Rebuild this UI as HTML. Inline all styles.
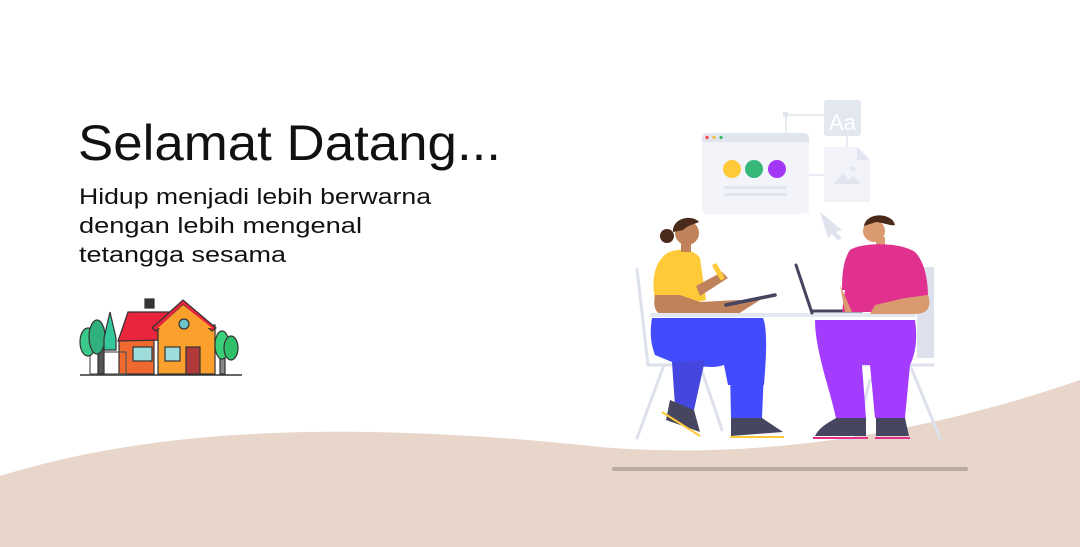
<!DOCTYPE html>
<html><head><meta charset="utf-8"><style>
html,body{margin:0;padding:0;background:#fff;width:1080px;height:547px;overflow:hidden}
svg{display:block}
</style></head><body>
<svg width="1080" height="547" viewBox="0 0 1080 547" xmlns="http://www.w3.org/2000/svg">
<rect width="1080" height="547" fill="#fff"/>
<path d="M0,476 C140,432 330,418 600,447 C780,462 950,425 1080,380 L1080,547 L0,547 Z" fill="#e8d6ca"/>
<line x1="614" y1="469" x2="966" y2="469" stroke="#b9aaa2" stroke-width="4" stroke-linecap="round"/>

<g font-family="Liberation Sans, sans-serif" fill="#111">
<text x="78" y="160" font-size="50" font-weight="300" textLength="423" lengthAdjust="spacingAndGlyphs">Selamat Datang...</text>
<text x="79" y="204" font-size="22" textLength="352" lengthAdjust="spacingAndGlyphs">Hidup menjadi lebih berwarna</text>
<text x="79" y="233" font-size="22" textLength="283" lengthAdjust="spacingAndGlyphs">dengan lebih mengenal</text>
<text x="79" y="262" font-size="22" textLength="207" lengthAdjust="spacingAndGlyphs">tetangga sesama</text>
</g>

<!-- house -->
<g stroke="#333" stroke-width="1.2">
<line x1="80" y1="375" x2="242" y2="375" stroke-width="1.5"/>
<rect x="145" y="299" width="9" height="9" fill="#333"/>
<rect x="119" y="340" width="35" height="34" fill="#f06a30"/>
<polygon points="128,312 176,312 165,340 118,341" fill="#e8253d"/>
<rect x="158" y="325" width="57" height="49" fill="#fba02c"/>
<polygon points="152,328 183,300 216,328 212,331 183,305 156,331" fill="#e8253d"/>
<polygon points="158,328 183,305 212,328" fill="#fba02c" stroke="none"/>
<circle cx="184" cy="324" r="5" fill="#6dc3c5"/>
<rect x="133" y="347" width="19" height="14" fill="#9edddc"/>
<rect x="165" y="347" width="15" height="14" fill="#9edddc"/>
<rect x="186" y="347" width="14" height="27" fill="#b03a3a"/>
<rect x="90" y="352" width="36" height="22" fill="none" stroke="#555"/>
<rect x="98" y="328" width="6" height="46" fill="#555"/>
<ellipse cx="88" cy="342" rx="8" ry="14" fill="#3bc88b"/>
<ellipse cx="97" cy="337" rx="8" ry="17" fill="#2fb07d"/>
<path d="M110,312 L116,338 L116,350 L104,350 L104,338 Z" fill="#34c79b"/>
<rect x="220" y="352" width="5" height="22" fill="#888"/>
<ellipse cx="222" cy="345" rx="7" ry="14" fill="#3bd07a"/>
<ellipse cx="231" cy="348" rx="7" ry="12" fill="#2fbf6a"/>
</g>

<!-- illustration -->
<g>
<!-- connectors -->
<path d="M786,133 V115 H824 M808,175 H824 M847,136 V147" stroke="#e1e5ef" stroke-width="1.5" fill="none"/>
<rect x="783" y="112" width="5" height="5" fill="#e1e5ef"/>
<rect x="824" y="100" width="37" height="36" rx="3" fill="#e3e7f0"/>
<text x="829" y="130" font-family="Liberation Sans, sans-serif" font-size="22" fill="#fff">Aa</text>
<path d="M824,147 H858 L870,160 V202 H824 Z" fill="#f1f3f8"/>
<path d="M857,147 L870,160 H857 Z" fill="#e1e5ef"/>
<path d="M834,184 L843,173 L849,180 L853,176 L861,184 Z" fill="#e1e5ef"/>
<circle cx="853" cy="169" r="2.5" fill="#e1e5ef"/>
<rect x="702" y="133" width="107" height="81" rx="5" fill="#f2f4f9"/>
<path d="M702,142 V138 a5,5 0 0 1 5,-5 H804 a5,5 0 0 1 5,5 V142 Z" fill="#e1e5ef"/>
<circle cx="707" cy="137.5" r="1.6" fill="#f44"/><circle cx="714" cy="137.5" r="1.6" fill="#fb3"/><circle cx="721" cy="137.5" r="1.6" fill="#3b6"/>
<circle cx="732" cy="169" r="9" fill="#ffc93a"/><circle cx="754" cy="169" r="9" fill="#36b879"/><circle cx="777" cy="169" r="9" fill="#a437f5"/>
<rect x="724" y="186" width="63" height="3" rx="1.5" fill="#e1e5ef"/>
<rect x="724" y="193" width="63" height="3" rx="1.5" fill="#e1e5ef"/>
<path d="M820,212 L842,230 L836,232 L842,238 L838,240 L832,234 L828,238 Z" fill="#dfe3ee"/>

<!-- chairs -->
<g stroke="#dde1ec" stroke-width="3" fill="none" stroke-linecap="round">
<path d="M637,269 L648,365 H700 M664,365 L637,438 M700,365 L722,430"/>
<path d="M860,365 H933 M910,365 L940,438 M870,380 L855,438"/>
</g>
<rect x="917" y="267" width="17" height="91" fill="#dde1ec"/>

<!-- woman -->
<path d="M662,258 C668,248 692,246 700,258 L706,300 L660,312 C652,300 650,270 662,258 Z" fill="#ffca3a"/>
<path d="M655,295 C652,310 658,316 668,316 L738,314 L760,300 L738,300 L700,302 L680,295 Z" fill="#c0825a"/>
<path d="M696,286 L722,272 L728,278 L700,296 Z" fill="#c0825a"/>
<rect x="716" y="263" width="5" height="18" rx="2" transform="rotate(-30 718 272)" fill="#ffca3a"/>
<path d="M726,305 L775,295" stroke="#454560" stroke-width="3.5" stroke-linecap="round"/>
<circle cx="687" cy="233" r="12" fill="#c0825a"/>
<path d="M673,232 C672,218 692,214 699,222 C695,224 688,225 683,230 Z" fill="#4a2a1a"/>
<circle cx="667" cy="236" r="7" fill="#4a2a1a"/>
<rect x="681" y="240" width="10" height="12" fill="#c0825a"/>
<path d="M652,318 H763 C768,330 766,360 764,385 L728,385 L724,365 C710,370 690,364 672,362 L655,355 C650,342 650,330 652,318 Z" fill="#434bff"/>
<path d="M672,362 L705,360 L694,410 L675,406 Z" fill="#4446de"/>
<path d="M730,370 L764,370 L762,418 L731,418 Z" fill="#434bff"/>
<path d="M670,400 L694,410 L700,432 L666,420 Z" fill="#464660"/>
<path d="M662,412 L700,436" stroke="#ffca3a" stroke-width="2"/>
<path d="M731,418 L762,418 L783,432 L731,436 Z" fill="#464660"/>
<path d="M730,437 H784" stroke="#ffca3a" stroke-width="2"/>

<!-- table -->
<rect x="650" y="313" width="266" height="4" rx="2" fill="#e3e7f0"/>

<!-- man -->
<path d="M796,265 L812,313" stroke="#454560" stroke-width="3" stroke-linecap="round"/>
<path d="M812,311 H862" stroke="#454560" stroke-width="3" stroke-linecap="round"/>
<circle cx="874" cy="231" r="11" fill="#d89a6e"/>
<path d="M864,226 C866,212 892,212 895,225 C890,226 885,223 876,222 Z" fill="#4a2a1a"/>
<rect x="876" y="237" width="9" height="10" fill="#d89a6e"/>
<path d="M850,250 C862,242 900,242 915,252 C925,262 928,282 928,295 L910,298 L905,312 L842,312 L845,290 L842,290 C842,275 843,260 850,250 Z" fill="#e0318f"/>
<path d="M840,285 L845,312 L852,312 Z" fill="#d89a6e"/>
<path d="M905,298 L928,295 C932,306 928,314 915,314 L870,314 L875,305 Z" fill="#d89a6e"/>
<path d="M815,320 H915 C918,340 915,355 910,365 L905,418 L875,418 L870,365 L862,365 L866,418 L836,418 C830,390 815,350 815,320 Z" fill="#a43cff"/>
<path d="M836,418 L866,418 L866,436 L815,436 C820,426 830,422 836,418 Z" fill="#464660"/>
<path d="M813,438 H868" stroke="#e0318f" stroke-width="2"/>
<path d="M876,418 L905,418 L909,436 L876,436 Z" fill="#464660"/>
<path d="M875,438 H910" stroke="#e0318f" stroke-width="2"/>
</g>
</svg>
</body></html>
